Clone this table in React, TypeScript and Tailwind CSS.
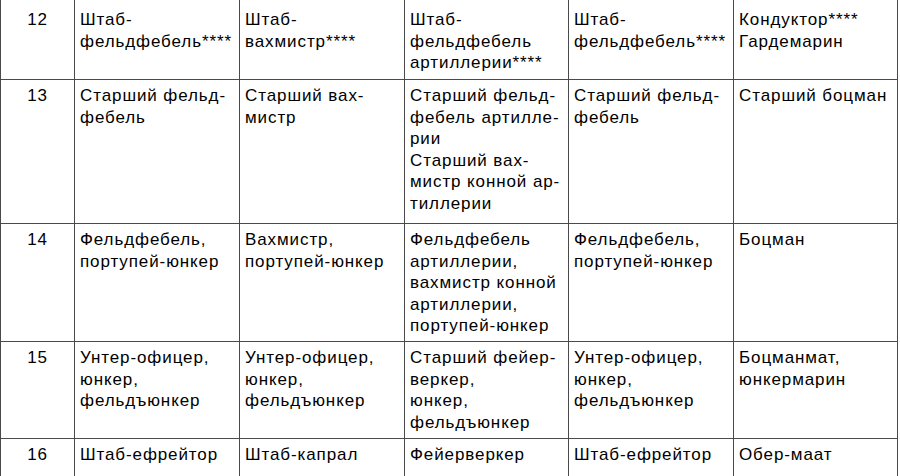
const rows: { n: string; h: string; pt: string; cells: string[] }[] = [
  {
    n: "12",
    h: "h-[80px]",
    pt: "pt-[9px]",
    cells: [
      "Штаб-\nфельдфебель****",
      "Штаб-\nвахмистр****",
      "Штаб-\nфельдфебель\nартиллерии****",
      "Штаб-\nфельдфебель****",
      "Кондуктор****\nГардемарин",
    ],
  },
  {
    n: "13",
    h: "h-[144px]",
    pt: "pt-[5px]",
    cells: [
      "Старший фельд-\nфебель",
      "Старший вах-\nмистр",
      "Старший фельд-\nфебель артилле-\nрии\nСтарший вах-\nмистр конной ар-\nтиллерии",
      "Старший фельд-\nфебель",
      "Старший боцман",
    ],
  },
  {
    n: "14",
    h: "h-[118px]",
    pt: "pt-[5px]",
    cells: [
      "Фельдфебель,\nпортупей-юнкер",
      "Вахмистр,\nпортупей-юнкер",
      "Фельдфебель\nартиллерии,\nвахмистр конной\nартиллерии,\nпортупей-юнкер",
      "Фельдфебель,\nпортупей-юнкер",
      "Боцман",
    ],
  },
  {
    n: "15",
    h: "h-[97px]",
    pt: "pt-[5px]",
    cells: [
      "Унтер-офицер,\nюнкер,\nфельдъюнкер",
      "Унтер-офицер,\nюнкер,\nфельдъюнкер",
      "Старший фейер-\nверкер,\nюнкер,\nфельдъюнкер",
      "Унтер-офицер,\nюнкер,\nфельдъюнкер",
      "Боцманмат,\nюнкермарин",
    ],
  },
  {
    n: "16",
    h: "h-[60px]",
    pt: "pt-[5px]",
    cells: ["Штаб-ефрейтор", "Штаб-капрал", "Фейерверкер", "Штаб-ефрейтор", "Обер-маат"],
  },
]

const widths = ["w-[165px]", "w-[165px]", "w-[164px]", "w-[165px]", "w-[164px]"]

export default function App() {
  return (
    <div className="h-[476px] w-[900px] overflow-hidden bg-white font-['Liberation_Sans',Arial,sans-serif] text-[17px] leading-[21.6px] tracking-[0.9px] text-black">
      <div className="flex w-[898px] flex-col">
        {rows.map((row) => (
          <div key={row.n} className={`flex shrink-0 border-b border-[#4a4a4a] ${row.h}`}>
            <div className={`w-[75px] shrink-0 border-x border-[#4a4a4a] text-center ${row.pt}`}>{row.n}</div>
            {row.cells.map((text, i) => (
              <div
                key={i}
                className={`shrink-0 whitespace-pre-line border-r border-[#4a4a4a] pl-[5px] ${row.pt} ${widths[i]}`}
              >
                {text}
              </div>
            ))}
          </div>
        ))}
      </div>
    </div>
  )
}
